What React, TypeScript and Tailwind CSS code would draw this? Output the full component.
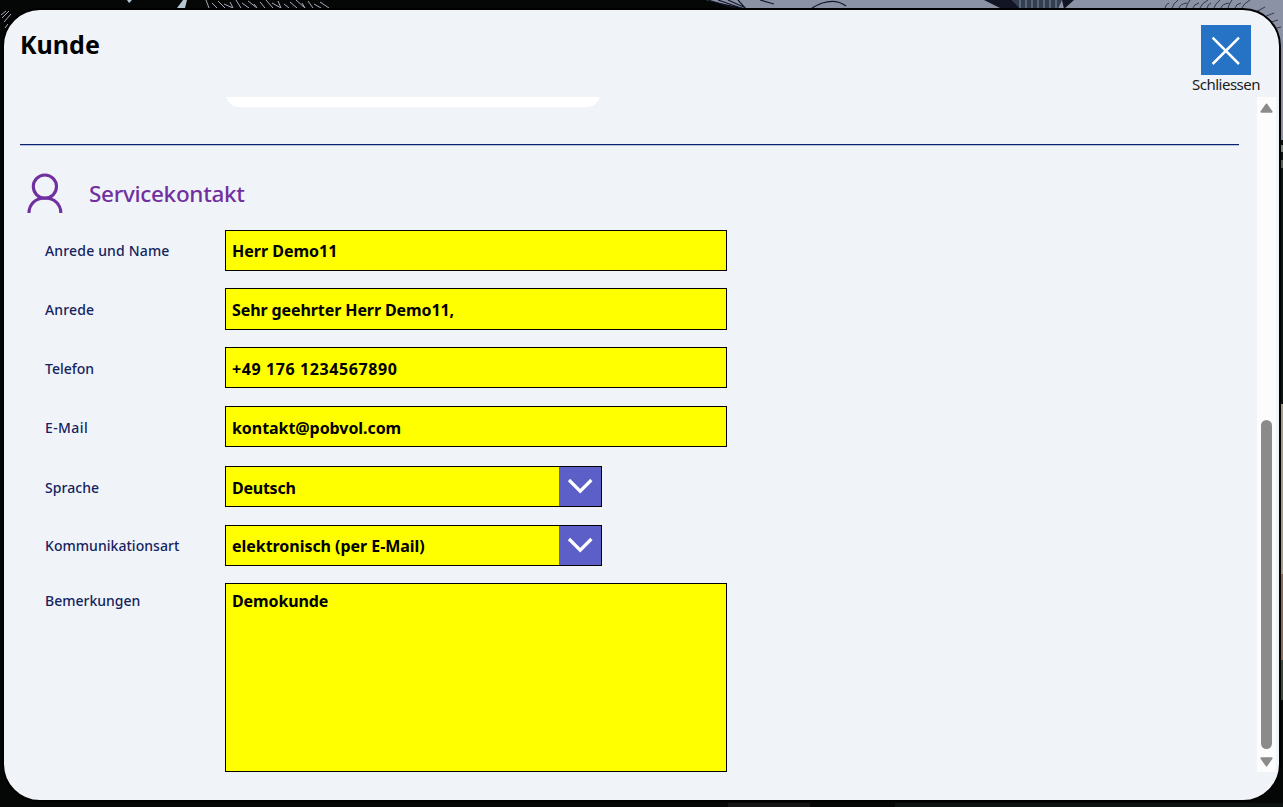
import type { ReactNode } from "react";

type RowProps = { label: string; labelTop: string; gap: string; tracking: string; children: ReactNode };

function Row({ label, labelTop, gap, tracking, children }: RowProps) {
  return (
    <div className={`flex items-start ${gap}`}>
      <div className={`w-[180px] shrink-0 text-[14px] leading-5 font-medium text-[#14235f] ${labelTop} ${tracking}`}>{label}</div>
      {children}
    </div>
  );
}

function Field({ value, height, pad, tracking }: { value: string; height: string; pad: string; tracking: string }) {
  return (
    <div className={`w-[502px] border border-black bg-[#ffff00] pl-[6px] text-[16px] leading-[22px] font-bold text-black ${height} ${pad} ${tracking}`}>
      {value}
    </div>
  );
}

function Select({ value, pad, tracking }: { value: string; pad: string; tracking: string }) {
  return (
    <div className="flex h-[41px] w-[377px] border border-black bg-[#ffff00]">
      <div className={`flex-1 pl-[6px] text-[16px] leading-[22px] font-bold text-black ${pad} ${tracking}`}>{value}</div>
      <div className="w-[42px] bg-[#5c5fc7]">
        <svg width="42" height="39" viewBox="0 0 42 39" fill="none" stroke="#fff" strokeWidth="3.2">
          <path d="M10 13 L21.2 24.2 L32.4 13" />
        </svg>
      </div>
    </div>
  );
}

function Backdrop() {
  const spikes = Array.from({ length: 20 }, (_, i) => 206 + i * 6);
  const hairs = Array.from({ length: 12 }, (_, i) => 1165 + i * 7);
  return (
    <svg className="absolute inset-0" width="1283" height="807" viewBox="0 0 1283 807">
      <rect width="1283" height="807" fill="#050606" />
      <path d="M706 0 H1283 V140 H1200 V9 H748Z" fill="#8b92a5" />
      <g stroke="#aaa9bd" strokeWidth="1" fill="none">
        {spikes.map((x, i) => (
          <path key={x} d={`M${x} ${(i * 3) % 5} l${3 + (i % 4) * 2} ${8 - ((i * 3) % 5)}`} />
        ))}
        <path d="M2 18 l7 -7 M4 22 l7 -8 M1 15 l5 -4 M5 28 l3 -4" />
      </g>
      <path d="M177 8 L183 0 H187 L185 8Z M127 0 h5 l-3 3Z" fill="#b5c7d2" />
      <path d="M708 0 l30 9 M718 0 l26 9 M728 0 l20 9 M738 0 l8 9 M760 0 l14 4 M812 8 q20 -12 34 -2" stroke="#14172c" strokeWidth="1.2" fill="none" />
      <path d="M984 0 L1002 9 H1022 L1012 0Z M1062 0 h12 L1064 9Z" fill="#111524" />
      <path d="M1012 0 H1062 L1058 9 H1020Z" fill="#343e51" />
      <path d="M1020 0v9 M1026 0v9 M1032 0v9 M1038 0v9 M1044 0v9 M1050 0v9 M1056 0v9" stroke="#8090a0" />
      <g stroke="#303849" fill="none">
        {hairs.map((x, i) => (
          <path key={x} d={`M${x} 8 q1 -4 ${4 + (i % 3) * 2} ${-5 - (i % 2) * 3}`} />
        ))}
        <path d="M1252 14 l13 -7 M1259 19 l15 -6 M1265 24 l13 -4 M1270 30 l11 -3" />
      </g>
      <rect x="1281" y="140" width="2" height="264" fill="#0d1212" />
      <rect x="1281" y="145" width="2" height="7" fill="#7c847d" />
      <rect x="1281" y="160" width="2" height="8" fill="#59605c" />
      <rect x="1281" y="404" width="2" height="170" fill="#a39c82" />
      <rect x="1281" y="574" width="2" height="86" fill="#8c6b55" />
      <rect x="1281" y="660" width="2" height="40" fill="#3e4640" />
      <rect x="728" y="803" width="82" height="4" fill="#151515" />
      <rect x="895" y="803" width="388" height="4" fill="#0d1311" />
    </svg>
  );
}

export default function App() {
  return (
    <main className="relative h-[807px] w-[1283px] overflow-hidden bg-black font-['Noto_Sans','Open_Sans',sans-serif]">
      <Backdrop />
      <section className="relative mt-2 ml-[2px] flex h-[794px] w-[1279px] flex-col overflow-hidden rounded-[38px] border-2 border-black bg-[#f0f4f9]">
        <header className="flex h-[87px] shrink-0 justify-between pl-4">
          <h1 className="pt-[17px] text-[25px] leading-[34px] font-bold text-black">Kunde</h1>
          <button className="mr-[14px] flex w-[78px] flex-col items-center pt-[15px]">
            <span className="flex size-[50px] shrink-0 bg-[#2672c5]">
              <svg width="50" height="50" viewBox="0 0 50 50" fill="none" stroke="#fff" strokeWidth="2.5">
                <path d="M11.6 12.6 L38 39 M38 12.6 L11.6 39" />
              </svg>
            </span>
            <span className="-mt-px text-[15px] leading-5 tracking-[-0.5px] text-[#1b1b1b]">Schliessen</span>
          </button>
        </header>
        <div className="flex h-[675px] shrink-0">
          <div className="w-[1253px] pl-4">
            <div className="ml-[206px] h-[10px] w-[374px] overflow-hidden">
              <div className="-mt-[31px] h-[41px] rounded-[13px] bg-white" />
            </div>
            <div className="mt-[37px] h-[2px] w-[1219px] border-t border-[#0b226c] bg-[#b5bfdc]" />
            <div className="flex h-[84px] pl-[6px]">
              <svg className="mt-[24px]" width="38" height="44" viewBox="0 0 38 44" fill="none" stroke="#7030a0" strokeWidth="3.1">
                <circle cx="18.9" cy="16.6" r="11.6" />
                <path d="M3 43 C3 34 9.8 28 18.9 28 S34.8 34 34.8 43" />
              </svg>
              <h2 className="mt-[32px] ml-[25px] text-[22.5px] leading-8 font-medium tracking-[-0.3px] text-[#7030a0]">Servicekontakt</h2>
            </div>
            <div className="pl-[25px]">
              <Row label="Anrede und Name" labelTop="pt-[11px]" gap="" tracking="tracking-[0.17px]"><Field value="Herr Demo11" height="h-[41px]" pad="pt-[9px]" tracking="" /></Row>
              <Row label="Anrede" labelTop="pt-[12px]" gap="mt-[17px]" tracking="tracking-[0.15px]"><Field value="Sehr geehrter Herr Demo11," height="h-[42px]" pad="pt-[10px]" tracking="tracking-[-0.1px]" /></Row>
              <Row label="Telefon" labelTop="pt-[12px]" gap="mt-[17px]" tracking=""><Field value="+49 176 1234567890" height="h-[41px]" pad="pt-[10px]" tracking="tracking-[0.6px]" /></Row>
              <Row label="E-Mail" labelTop="pt-[12px]" gap="mt-[18px]" tracking="tracking-[0.4px]"><Field value="kontakt@pobvol.com" height="h-[41px]" pad="pt-[10px]" tracking="tracking-[-0.06px]" /></Row>
              <Row label="Sprache" labelTop="pt-[12px]" gap="mt-[19px]" tracking="tracking-[0.07px]"><Select value="Deutsch" pad="pt-[10px]" tracking="tracking-[-0.25px]" /></Row>
              <Row label="Kommunikationsart" labelTop="pt-[11px]" gap="mt-[18px]" tracking="tracking-[0.04px]"><Select value="elektronisch (per E-Mail)" pad="pt-[9px]" tracking="tracking-[-0.04px]" /></Row>
              <Row label="Bemerkungen" labelTop="pt-[8px]" gap="mt-[17px]" tracking=""><Field value="Demokunde" height="h-[189px]" pad="pt-[6px]" tracking="tracking-[-0.12px]" /></Row>
            </div>
          </div>
          <div className="flex w-[19px] flex-col items-center bg-[#fcfcfc]">
            <svg className="mt-[6px] shrink-0" width="13" height="10" viewBox="0 0 13 10" fill="#8b8b8b" stroke="#8b8b8b" strokeLinejoin="round" strokeWidth="2">
              <path d="M6.5 1.5 L11.6 8.8 H1.4Z" />
            </svg>
            <div className="mt-[307px] h-[329px] w-[11px] shrink-0 rounded-full bg-[#8b8b8b]" />
            <svg className="mt-[8px] shrink-0" width="13" height="10" viewBox="0 0 13 10" fill="#8b8b8b" stroke="#8b8b8b" strokeLinejoin="round" strokeWidth="2">
              <path d="M6.5 8.5 L11.6 1.2 H1.4Z" />
            </svg>
          </div>
        </div>
      </section>
    </main>
  );
}
